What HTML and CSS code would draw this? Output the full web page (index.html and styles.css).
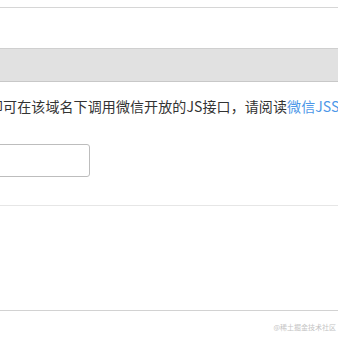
FILE: index.html
```html
<!DOCTYPE html>
<html lang="zh-CN">
<head>
	<meta charset="UTF-8">
	<title>JS接口安全域名</title>
	<link rel="stylesheet" href="styles.css">
</head>
<body>
	<div class="page">
		<div class="topbar"></div>
		<div class="band"></div>
		<section class="form">
			<p class="tip">即可在该域名下调用微信开放的JS接口，请阅读<a href="#">微信JSSDK说明文档</a></p>
			<input type="text" class="domain">
		</section>
		<div class="footer"></div>
		<div class="mark">@稀土掘金技术社区</div>
	</div>
</body>
</html>
```

FILE: styles.css
```css
html, body {
	margin: 0;
	padding: 0;
	background: #fff;
}
.page {
	width: 338px;
	height: 338px;
	overflow: hidden;
	font-family: "Noto Sans CJK SC", "Noto Sans", sans-serif;
	color: #333;
}
.topbar {
	height: 7px;
	border-bottom: 1px solid #d6d6d6;
}
.band {
	margin-top: 40px;
	height: 32px;
	background: #e1e1e1;
	border-top: 1px solid #cfcfcf;
	border-bottom: 1px solid #c8c8c8;
}
.form {
	padding-top: 14px;
	height: 109px;
	border-bottom: 1px solid #e6e6e6;
}
.tip {
	margin: 0 0 0 -11px;
	font-size: 14px;
	line-height: 20px;
	letter-spacing: 0.1px;
	white-space: nowrap;
}
.tip a {
	color: #4d97e8;
	text-decoration: none;
}
.domain {
	display: block;
	margin: 28px 0 0 -110px;
	width: 200px;
	height: 33px;
	box-sizing: border-box;
	border: 1px solid #bdbdbd;
	border-radius: 3px;
}
.footer {
	height: 104px;
	border-bottom: 1px solid #d2d2d2;
}
.mark {
	text-align: right;
	padding: 11px 2px 0 0;
	font-size: 7px;
	line-height: 10px;
	color: #c4c4c4;
	font-family: "Noto Sans CJK SC", serif;
}
```
